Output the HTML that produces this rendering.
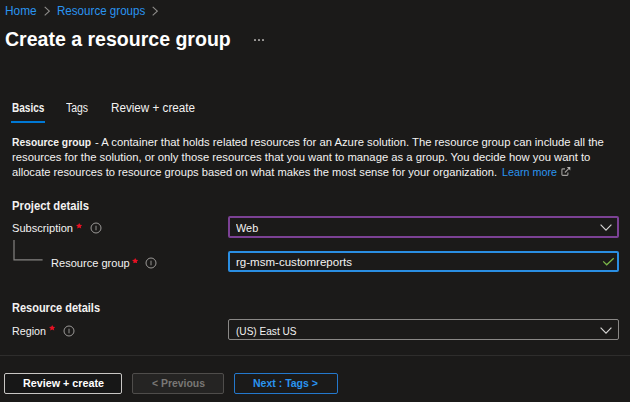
<!DOCTYPE html>
<html><head><meta charset="utf-8"><style>
html,body{margin:0;padding:0;width:630px;height:402px;overflow:hidden;background:#1b1a19}
body{position:relative;font-family:"Liberation Sans",sans-serif}
.t{position:absolute;white-space:pre;line-height:1;transform-origin:0 0}
.t b{font-weight:700}
.a{position:absolute}
.box{box-sizing:border-box;border-radius:2px}
.dot{position:absolute;top:0;width:2px;height:2px;border-radius:0.6px;background:#9d9b99}
</style></head><body>

<svg class="a" style="left:43.5px;top:5.5px" width="6" height="10" viewBox="0 0 6 10"><polyline points="0.7,0.9 5.3,5.1 0.7,9.4" fill="none" stroke="#8f8d8b" stroke-width="1.1"/></svg>
<svg class="a" style="left:151.7px;top:5.5px" width="6" height="10" viewBox="0 0 6 10"><polyline points="0.7,0.9 5.3,5.1 0.7,9.4" fill="none" stroke="#8f8d8b" stroke-width="1.1"/></svg>
<div class="a" style="left:253px;top:39px;width:12px;height:2px">
 <span class="dot" style="left:0.9px"></span><span class="dot" style="left:4.7px"></span><span class="dot" style="left:8.5px"></span>
</div>
<div class="a" style="left:11px;top:121px;width:33.5px;height:2px;background:#0078d4"></div>
<svg class="a" style="left:560px;top:166px" width="12" height="11" viewBox="0 0 12 11"><path d="M5,2.9 H2.8 Q1.9,2.9 1.9,3.8 V8.5 Q1.9,9.4 2.8,9.4 H7 Q7.9,9.4 7.9,8.5 V6.4" fill="none" stroke="#a19f9d" stroke-width="1.1"/><path d="M4.9,6.5 L9,2.4" fill="none" stroke="#a19f9d" stroke-width="1.1"/><polygon points="10.3,1.1 10.3,4.6 6.8,1.1" fill="#b5b3b1"/></svg>
<svg class="a" style="left:75.9px;top:222.9px" width="6.4" height="5.8" viewBox="0 0 10 10" preserveAspectRatio="none"><polygon points="5,0 6.5,3.2 10,3.5 7.4,5.9 8.2,9.6 5,7.7 1.8,9.6 2.6,5.9 0,3.5 3.5,3.2" fill="#e81123"/></svg>
<svg class="a" style="left:89.55px;top:222.10px" width="12" height="12" viewBox="0 0 12 12"><circle cx="6" cy="6" r="5" fill="none" stroke="#a19f9d" stroke-width="0.95"/><line x1="6" y1="3.7" x2="6" y2="8.3" stroke="#a19f9d" stroke-width="0.9"/></svg>
<svg class="a" style="left:0;top:230px" width="50" height="40" viewBox="0 230 50 40"><path d="M14,240 V259.9 H42.6" fill="none" stroke="#858381" stroke-width="1.2"/></svg>
<svg class="a" style="left:131.6px;top:257.6px" width="6.4" height="5.8" viewBox="0 0 10 10" preserveAspectRatio="none"><polygon points="5,0 6.5,3.2 10,3.5 7.4,5.9 8.2,9.6 5,7.7 1.8,9.6 2.6,5.9 0,3.5 3.5,3.2" fill="#e81123"/></svg>
<svg class="a" style="left:145.10px;top:256.50px" width="12" height="12" viewBox="0 0 12 12"><circle cx="6" cy="6" r="5" fill="none" stroke="#a19f9d" stroke-width="0.95"/><line x1="6" y1="3.7" x2="6" y2="8.3" stroke="#a19f9d" stroke-width="0.9"/></svg>
<div class="a box" style="left:228px;top:216px;width:391px;height:22px;border:2px solid #7b4194"></div>
<svg class="a" style="left:599.6px;top:224.4px" width="13" height="8" viewBox="0 0 13 8"><polyline points="0.6,0.6 6,6.1 11.4,0.6" fill="none" stroke="#d6d5d4" stroke-width="1.15"/></svg>
<div class="a box" style="left:228px;top:251px;width:391px;height:21px;border:2px solid #2a8ee2"></div>
<svg class="a" style="left:602px;top:257px" width="13" height="10" viewBox="0 0 13 10"><polyline points="1.2,4.4 4.7,7.8 11.7,1.3" fill="none" stroke="#7ab648" stroke-width="1.25"/></svg>
<svg class="a" style="left:48.8px;top:325.3px" width="6.4" height="5.8" viewBox="0 0 10 10" preserveAspectRatio="none"><polygon points="5,0 6.5,3.2 10,3.5 7.4,5.9 8.2,9.6 5,7.7 1.8,9.6 2.6,5.9 0,3.5 3.5,3.2" fill="#e81123"/></svg>
<svg class="a" style="left:62.60px;top:324.50px" width="12" height="12" viewBox="0 0 12 12"><circle cx="6" cy="6" r="5" fill="none" stroke="#a19f9d" stroke-width="0.95"/><line x1="6" y1="3.7" x2="6" y2="8.3" stroke="#a19f9d" stroke-width="0.9"/></svg>
<div class="a box" style="left:228px;top:319px;width:391px;height:21px;border:1px solid #8a8886"></div>
<svg class="a" style="left:599.6px;top:326.8px" width="13" height="8" viewBox="0 0 13 8"><polyline points="0.6,0.6 6,6.1 11.4,0.6" fill="none" stroke="#d6d5d4" stroke-width="1.15"/></svg>
<div class="a" style="left:0;top:355px;width:630px;height:1px;background:#2e2d2c"></div>
<div class="a box" style="left:4px;top:372.5px;width:118px;height:21px;border:1px solid #c8c6c4;background:#171717"></div>
<div class="a box" style="left:132px;top:372.5px;width:92px;height:21px;border:1px solid #4f4d4b;background:#252423"></div>
<div class="a box" style="left:234px;top:372.5px;width:103.5px;height:21px;border:1px solid #2478cc"></div>

<div id="home" class="t" style="left:5.00px;top:4.71px;font-size:12px;font-weight:400;color:#2a94f0;transform:scaleX(0.9906)">Home</div>
<div id="rg" class="t" style="left:56.70px;top:4.71px;font-size:12px;font-weight:400;color:#2a94f0;transform:scaleX(0.9663)">Resource groups</div>
<div id="title" class="t" style="left:5.00px;top:28.60px;font-size:20px;font-weight:700;color:#ffffff;transform:scaleX(0.9764)">Create a resource group</div>
<div id="basics" class="t" style="left:12.00px;top:102.11px;font-size:12px;font-weight:700;color:#f3f2f1;transform:scaleX(0.8361)">Basics</div>
<div id="tags" class="t" style="left:65.90px;top:102.11px;font-size:12px;font-weight:400;color:#f3f2f1;transform:scaleX(0.8709)">Tags</div>
<div id="review" class="t" style="left:110.90px;top:102.11px;font-size:12px;font-weight:400;color:#f3f2f1;transform:scaleX(0.9725)">Review + create</div>
<div id="p1a" class="t" style="left:12.00px;top:136.91px;font-size:11.5px;font-weight:700;color:#f3f2f1;transform:scaleX(0.8963)">Resource group</div>
<div id="p1b" class="t" style="left:95.00px;top:136.91px;font-size:11.5px;font-weight:400;color:#f3f2f1;transform:scaleX(0.9806)">- A container that holds related resources for an Azure solution. The resource group can include all the</div>
<div id="p2" class="t" style="left:11.60px;top:151.82px;font-size:11.5px;font-weight:400;color:#f3f2f1;transform:scaleX(0.9791)">resources for the solution, or only those resources that you want to manage as a group. You decide how you want to</div>
<div id="p3" class="t" style="left:11.60px;top:167.32px;font-size:11.5px;font-weight:400;color:#f3f2f1;transform:scaleX(0.9702)">allocate resources to resource groups based on what makes the most sense for your organization.</div>
<div id="learn" class="t" style="left:501.60px;top:167.32px;font-size:11.5px;font-weight:400;color:#2a94f0;transform:scaleX(0.9359)">Learn more</div>
<div id="proj" class="t" style="left:12.10px;top:200.21px;font-size:12px;font-weight:700;color:#f3f2f1;transform:scaleX(0.9378)">Project details</div>
<div id="sub" class="t" style="left:12.10px;top:223.41px;font-size:11.5px;font-weight:400;color:#f3f2f1;transform:scaleX(0.9644)">Subscription</div>
<div id="rglabel" class="t" style="left:50.70px;top:257.91px;font-size:11.5px;font-weight:400;color:#f3f2f1;transform:scaleX(0.9624)">Resource group</div>
<div id="web" class="t" style="left:236.20px;top:223.01px;font-size:11.5px;font-weight:400;color:#f3f2f1;transform:scaleX(0.9489)">Web</div>
<div id="rgval" class="t" style="left:236.20px;top:256.60px;font-size:11.5px;font-weight:400;color:#f3f2f1;transform:scaleX(1.0032)">rg-msm-customreports</div>
<div id="resdet" class="t" style="left:12.00px;top:302.11px;font-size:12px;font-weight:700;color:#f3f2f1;transform:scaleX(0.9167)">Resource details</div>
<div id="region" class="t" style="left:12.00px;top:325.71px;font-size:11.5px;font-weight:400;color:#f3f2f1;transform:scaleX(0.9315)">Region</div>
<div id="east" class="t" style="left:236.10px;top:325.60px;font-size:11.5px;font-weight:400;color:#f3f2f1;transform:scaleX(0.8768)">(US) East US</div>
<div id="btn1" class="t" style="left:22.70px;top:377.71px;font-size:11.5px;font-weight:700;color:#ffffff;transform:scaleX(0.9362)">Review + create</div>
<div id="btn2" class="t" style="left:152.00px;top:377.91px;font-size:11.5px;font-weight:700;color:#797775;transform:scaleX(0.9060)">&lt; Previous</div>
<div id="btn3" class="t" style="left:252.50px;top:377.60px;font-size:11.5px;font-weight:700;color:#2a94f0;transform:scaleX(0.9141)">Next : Tags &gt;</div>
</body></html>
